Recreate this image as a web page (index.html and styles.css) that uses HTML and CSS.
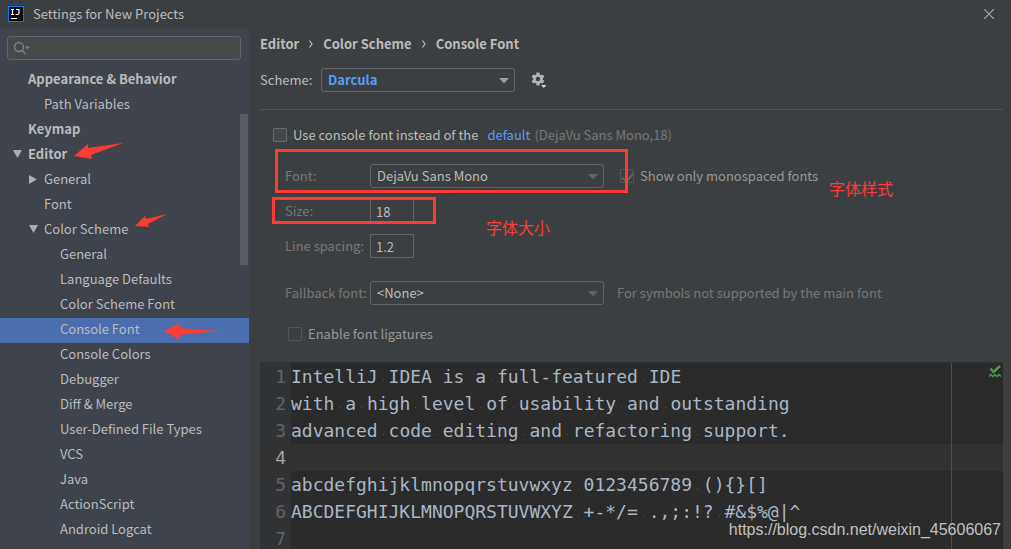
FILE: index.html
```
<!DOCTYPE html>
<html lang="en">
<head>
<meta charset="utf-8">
<title>Settings for New Projects</title>
<link rel="stylesheet" href="styles.css">
</head>
<body>
<div class="window">
  <header class="titlebar">
    <svg class="logo" width="16" height="16" viewBox="0 0 16 16" aria-hidden="true">
      <rect width="16" height="16" fill="#087cfa"/>
      <rect x="1" y="1" width="14" height="14" fill="#0b0b10"/>
      <path d="M3 3.500h3M4.500 3.500v5M3 8.500h3M8 3.500h3v3.500q0 1.500-1.500 1.500H7.500" fill="none" stroke="#fff" stroke-width="1.200"/>
      <path d="M3 12.500h6" stroke="#fff"/>
    </svg>
    <h1 class="title">Settings for New Projects</h1>
    <button class="close" type="button" aria-label="Close">
      <svg width="10" height="10" viewBox="0 0 10 10"><path d="M0 0l10 10M10 0L0 10" stroke="#a5a7a9" stroke-width="1.200"/></svg>
    </button>
  </header>

  <div class="body">
    <aside class="sidebar">
      <div class="search">
        <svg width="18" height="14" viewBox="0 0 18 14" aria-hidden="true"><circle cx="6" cy="6" r="4.500" fill="none" stroke="#7c8286" stroke-width="1.300"/><path d="M9 9.500l3.500 3.500" stroke="#7c8286" stroke-width="1.500"/><path d="M12 5.500h5l-2.500 3z" fill="#7c8286"/></svg>
        <input class="search-input" type="text" aria-label="Search settings">
      </div>
      <nav class="tree" aria-label="Settings">
        <a class="node top" href="#">Appearance &amp; Behavior</a>
        <a class="node level-2" href="#">Path Variables</a>
        <a class="node top" href="#">Keymap</a>
        <a class="node top" href="#"><svg class="twisty" viewBox="0 0 10 10"><path d="M1 1h9L5.500 9z" fill="#adadad"/></svg>Editor<svg class="arrow arrow-editor" width="49" height="17" viewBox="0 0 49 17"><path d="M0 13L14 1v4L49 0 17 12l1 4z" fill="#ff3b35"/></svg></a>
        <a class="node level-2" href="#"><svg class="twisty" viewBox="0 0 10 10"><path d="M1 1l8 4.500L1 10z" fill="#adadad"/></svg>General</a>
        <a class="node level-2" href="#">Font</a>
        <a class="node level-2" href="#"><svg class="twisty" viewBox="0 0 10 10"><path d="M1 1h9L5.500 9z" fill="#adadad"/></svg>Color Scheme<svg class="arrow arrow-scheme" width="32" height="14" viewBox="0 0 32 14"><path d="M0 12L10 2l1 3L32 0 13 10l1 3z" fill="#ff3b35"/></svg></a>
        <a class="node level-3" href="#">General</a>
        <a class="node level-3" href="#">Language Defaults</a>
        <a class="node level-3" href="#">Color Scheme Font</a>
        <a class="node level-3 selected" href="#" aria-current="page">Console Font<svg class="arrow arrow-console" width="55" height="17" viewBox="0 0 55 17"><path d="M0 8L16 0l-1 5 40 3-40 4 1 5z" fill="#ff3b35"/></svg></a>
        <a class="node level-3" href="#">Console Colors</a>
        <a class="node level-3" href="#">Debugger</a>
        <a class="node level-3" href="#">Diff &amp; Merge</a>
        <a class="node level-3" href="#">User-Defined File Types</a>
        <a class="node level-3" href="#">VCS</a>
        <a class="node level-3" href="#">Java</a>
        <a class="node level-3" href="#">ActionScript</a>
        <a class="node level-3" href="#">Android Logcat</a>
      </nav>
      <div class="scroll-thumb"></div>
    </aside>

    <main class="content">
      <nav class="crumbs" aria-label="Breadcrumb">
        <span>Editor</span>
        <svg width="4" height="8" viewBox="0 0 4 8"><path d="M.5.5l2.500 3.500L.5 7.500" fill="none" stroke="#bbb" stroke-width="1.200"/></svg>
        <span>Color Scheme</span>
        <svg width="4" height="8" viewBox="0 0 4 8"><path d="M.5.5l2.500 3.500L.5 7.500" fill="none" stroke="#bbb" stroke-width="1.200"/></svg>
        <span>Console Font</span>
      </nav>

      <div class="scheme">
        <label class="scheme-label" for="scheme">Scheme:</label>
        <div class="combo scheme-combo">
          <select id="scheme"><option>Darcula</option></select>
          <svg class="caret" viewBox="0 0 10 6"><path d="M0 0h10L5 5.500z" fill="#9da0a2"/></svg>
        </div>
        <button class="gear" type="button" aria-label="Scheme actions">
          <svg width="16" height="16" viewBox="0 0 16 16"><g fill="#afb1b3"><circle cx="7" cy="7" r="4.800"/><path d="M5.500 .5h3l.4 3H5.100zM5.500 13.500h3l.4-3H5.100z"/><path d="M5.500 .5h3l.4 3H5.100zM5.500 13.500h3l.4-3H5.100z" transform="rotate(60 7 7)"/><path d="M5.500 .5h3l.4 3H5.100zM5.500 13.500h3l.4-3H5.100z" transform="rotate(120 7 7)"/></g><circle cx="7" cy="7" r="2.200" fill="#3c3f41"/><path d="M9 12h7l-3.500 4z" fill="#3c3f41"/><path d="M10 13h5.500l-2.700 3z" fill="#d8d8d8"/></svg>
        </button>
      </div>

      <form class="form">
        <div class="row check-row">
          <input class="check" type="checkbox" id="use-console">
          <label class="strong" for="use-console">Use console font instead of the</label>
          <a class="link" href="#">default</a>
          <span>(DejaVu Sans Mono,18)</span>
        </div>
        <div class="row field-row">
          <label class="name" for="font">Font:</label>
          <div class="combo font-combo">
            <select id="font"><option>DejaVu Sans Mono</option></select>
            <svg class="caret" viewBox="0 0 10 6"><path d="M0 0h10L5 5.500z" fill="#5e6163"/></svg>
          </div>
          <div class="mono-only">
            <input class="check dim" type="checkbox" id="mono" checked>
            <label class="medium" for="mono">Show only monospaced fonts</label>
          </div>
          <div class="mark mark-font"></div>
          <span class="note note-style" lang="zh">字体样式</span>
        </div>
        <div class="row field-row">
          <label class="name" for="size">Size:</label>
          <input class="number" id="size" type="text" value="18">
          <div class="mark mark-size"></div>
          <span class="note note-size" lang="zh">字体大小</span>
        </div>
        <div class="row field-row">
          <label class="name" for="spacing">Line spacing:</label>
          <input class="number" id="spacing" type="text" value="1.2">
        </div>
        <div class="row field-row fallback">
          <label class="name" for="fallback">Fallback font:</label>
          <div class="combo font-combo">
            <select id="fallback"><option>&lt;None&gt;</option></select>
            <svg class="caret" viewBox="0 0 10 6"><path d="M0 0h10L5 5.500z" fill="#5e6163"/></svg>
          </div>
          <span class="hint">For symbols not supported by the main font</span>
        </div>
        <div class="row ligatures">
          <input class="check dim" type="checkbox" id="ligatures">
          <label class="medium" for="ligatures">Enable font ligatures</label>
        </div>
      </form>

      <section class="editor" aria-label="Preview">
        <div class="line"><span class="num">1</span><code>IntelliJ<i> </i>IDEA<i> </i>is<i> </i>a<i> </i>full-featured<i> </i>IDE</code></div>
        <div class="line"><span class="num">2</span><code>with<i> </i>a<i> </i>high<i> </i>level<i> </i>of<i> </i>usability<i> </i>and<i> </i>outstanding</code></div>
        <div class="line"><span class="num">3</span><code>advanced<i> </i>code<i> </i>editing<i> </i>and<i> </i>refactoring<i> </i>support.</code></div>
        <div class="line current"><span class="num">4</span><code></code></div>
        <div class="line"><span class="num">5</span><code>abcdefghijklmnopqrstuvwxyz<i> </i>0123456789<i> </i>(){}[]</code></div>
        <div class="line"><span class="num">6</span><code>ABCDEFGHIJKLMNOPQRSTUVWXYZ<i> </i>+-*/=<i> </i>.,;:!?<i> </i>#&amp;$%@|^</code></div>
        <div class="line"><span class="num">7</span><code></code></div>
        <div class="margin-guide"></div>
        <svg class="status" width="12" height="13" viewBox="0 0 12 13"><path d="M1.500 3.500l3 3.500L11 1" fill="none" stroke="#499c54" stroke-width="2.400"/><path d="M0 11.500l2-2 2 2 2-2 2 2 2-2 2 2" fill="none" stroke="#499c54" stroke-width="1.300"/></svg>
      </section>
      <span class="watermark">https://blog.csdn.net/weixin_45606067</span>
    </main>
  </div>
</div>
</body>
</html>
```
FILE: styles.css
```
* { box-sizing: border-box; }

body {
  margin: 0;
  background: #3c3f41;
  color: #bbbbbb;
  font: 13px/20px "Noto Sans CJK SC", "Open Sans", sans-serif;
}

a { color: inherit; text-decoration: none; }
button { padding: 0; border: 0; background: none; display: flex; }
input, select { font: inherit; color: inherit; margin: 0; }
svg { display: block; flex: none; }

.window { display: flex; flex-direction: column; height: 100vh; overflow: hidden; }

.titlebar { display: flex; align-items: center; height: 28px; padding: 0 17px 0 8px; }
.title { flex: 1; margin: 0 0 0 9px; font-size: 13px; font-weight: 400; }

.body { display: flex; flex: 1; min-height: 0; }

/* Sidebar */
.sidebar { position: relative; flex: none; width: 249px; padding-top: 8px; background: #3e434c; overflow: hidden; }
.search {
  display: flex; align-items: center; height: 24px; margin: 0 8px 0 7px; padding-left: 5px;
  background: #45494a; border: 1px solid #646464; border-radius: 3px;
}
.search-input { flex: 1; min-width: 0; border: 0; background: none; outline: 0; }
.tree { display: flex; flex-direction: column; padding-top: 7px; }
.node { position: relative; display: flex; align-items: center; flex: none; height: 25px; padding: 0 0 3px 28px; white-space: nowrap; }
.node:first-child { height: 26px; }
.top { font-weight: 700; }
.level-2 { padding-left: 44px; }
.level-3 { padding-left: 60px; }
.selected { background: #4b6eaf; }
.twisty { width: 10px; height: 10px; margin: 0 6px 0 -16px; }
.arrow { position: absolute; }
.arrow-editor { left: 74px; top: 0; }
.arrow-scheme { left: 135px; top: -4px; }
.arrow-console { left: 164px; top: 5px; }
.scroll-thumb { position: absolute; right: 1px; top: 86px; width: 8px; height: 151px; background: #595c63; }

/* Content */
.content { position: relative; display: flex; flex-direction: column; flex: 1; min-width: 0; padding: 6px 8px 0 11px; }
.crumbs { display: flex; align-items: center; gap: 10px; height: 20px; font-weight: 700; }
.scheme { display: flex; align-items: center; height: 56px; padding-bottom: 3px; border-bottom: 1px solid #515151; }
.scheme-label { width: 61px; }
.combo { position: relative; display: flex; }
.combo select {
  width: 100%; height: 24px; padding: 0 20px 0 6px; appearance: none; outline: 0;
  background: transparent; border: 1px solid #646464; border-radius: 3px;
}
.caret { position: absolute; right: 6px; top: 10px; width: 10px; height: 6px; pointer-events: none; }
.scheme-combo { width: 194px; }
.scheme-combo select { color: #589df6; font-weight: 700; }
.gear { margin-left: 16px; }

.form { display: flex; flex-direction: column; padding: 15px 0 18px 13px; color: #777777; }
.row { position: relative; display: flex; align-items: center; white-space: nowrap; }
.check {
  display: grid; place-items: center; width: 14px; height: 14px; margin-right: 6px; flex: none;
  appearance: none; background: #43494a; border: 1px solid #6b6b6b; border-radius: 1px;
}
.dim { background: none; border-color: #545556; }
.check:checked::before {
  content: ""; width: 5px; height: 9px; transform: rotate(40deg);
  border: solid #606364; border-width: 0 2px 2px 0;
}
.strong { color: #bbbbbb; }
.medium { color: #999999; }
.link { margin: 0 4px 0 9px; color: #589df6; }
.field-row { height: 24px; padding-left: 12px; margin-top: 11px; }
.check-row + .field-row { margin-top: 19px; }
.name { width: 85px; flex: none; }
.font-combo { width: 234px; flex: none; }
.font-combo select, .number { color: #bbbbbb; }
.number { width: 44px; height: 24px; padding: 0 5px; background: transparent; border: 1px solid #646464; outline: 0; }
.mono-only { display: flex; align-items: center; margin-left: 16px; }
.fallback { margin-top: 23px; }
.hint { margin-left: 13px; }
.ligatures { margin-top: 19px; padding-left: 15px; }

/* Annotations over the form */
.mark { position: absolute; border: 3px solid #ff3b35; pointer-events: none; }
.mark-font { left: 2px; top: -15px; width: 353px; height: 44px; }
.mark-size { left: -1px; top: -2px; width: 164px; height: 27px; }
.note { position: absolute; color: #ff3b35; font: 16px/20px "Noto Sans CJK SC", sans-serif; }
.note-style { left: 556px; top: 14px; }
.note-size { left: 213px; top: 18px; }

/* Preview editor */
.editor {
  position: relative; flex: 1; min-height: 0; overflow: hidden; border-top: 1px solid #323232;
  background: #2b2b2b; color: #a9b7c6; font: 18px/27px "DejaVu Sans Mono", monospace;
}
.line { display: flex; height: 27px; }
.line code { flex: 1; font: inherit; white-space: pre; }
.line i { font-style: normal; background: linear-gradient(#555, #555) 5px 14px / 1px 1px no-repeat; }
.num { width: 31px; flex: none; padding-right: 5px; text-align: right; background: #313335; color: #606366; }
.current { background: #323232; }
.current .num { background: none; color: #a4a3a3; }
.margin-guide { position: absolute; right: 51px; top: 0; bottom: 0; width: 1px; background: #4d4d4d; }
.status { position: absolute; right: 2px; top: 2px; }
.watermark { position: absolute; right: 10px; bottom: 9px; color: #c0c0c0; font: 16px/20px "Liberation Sans", sans-serif; }
```
